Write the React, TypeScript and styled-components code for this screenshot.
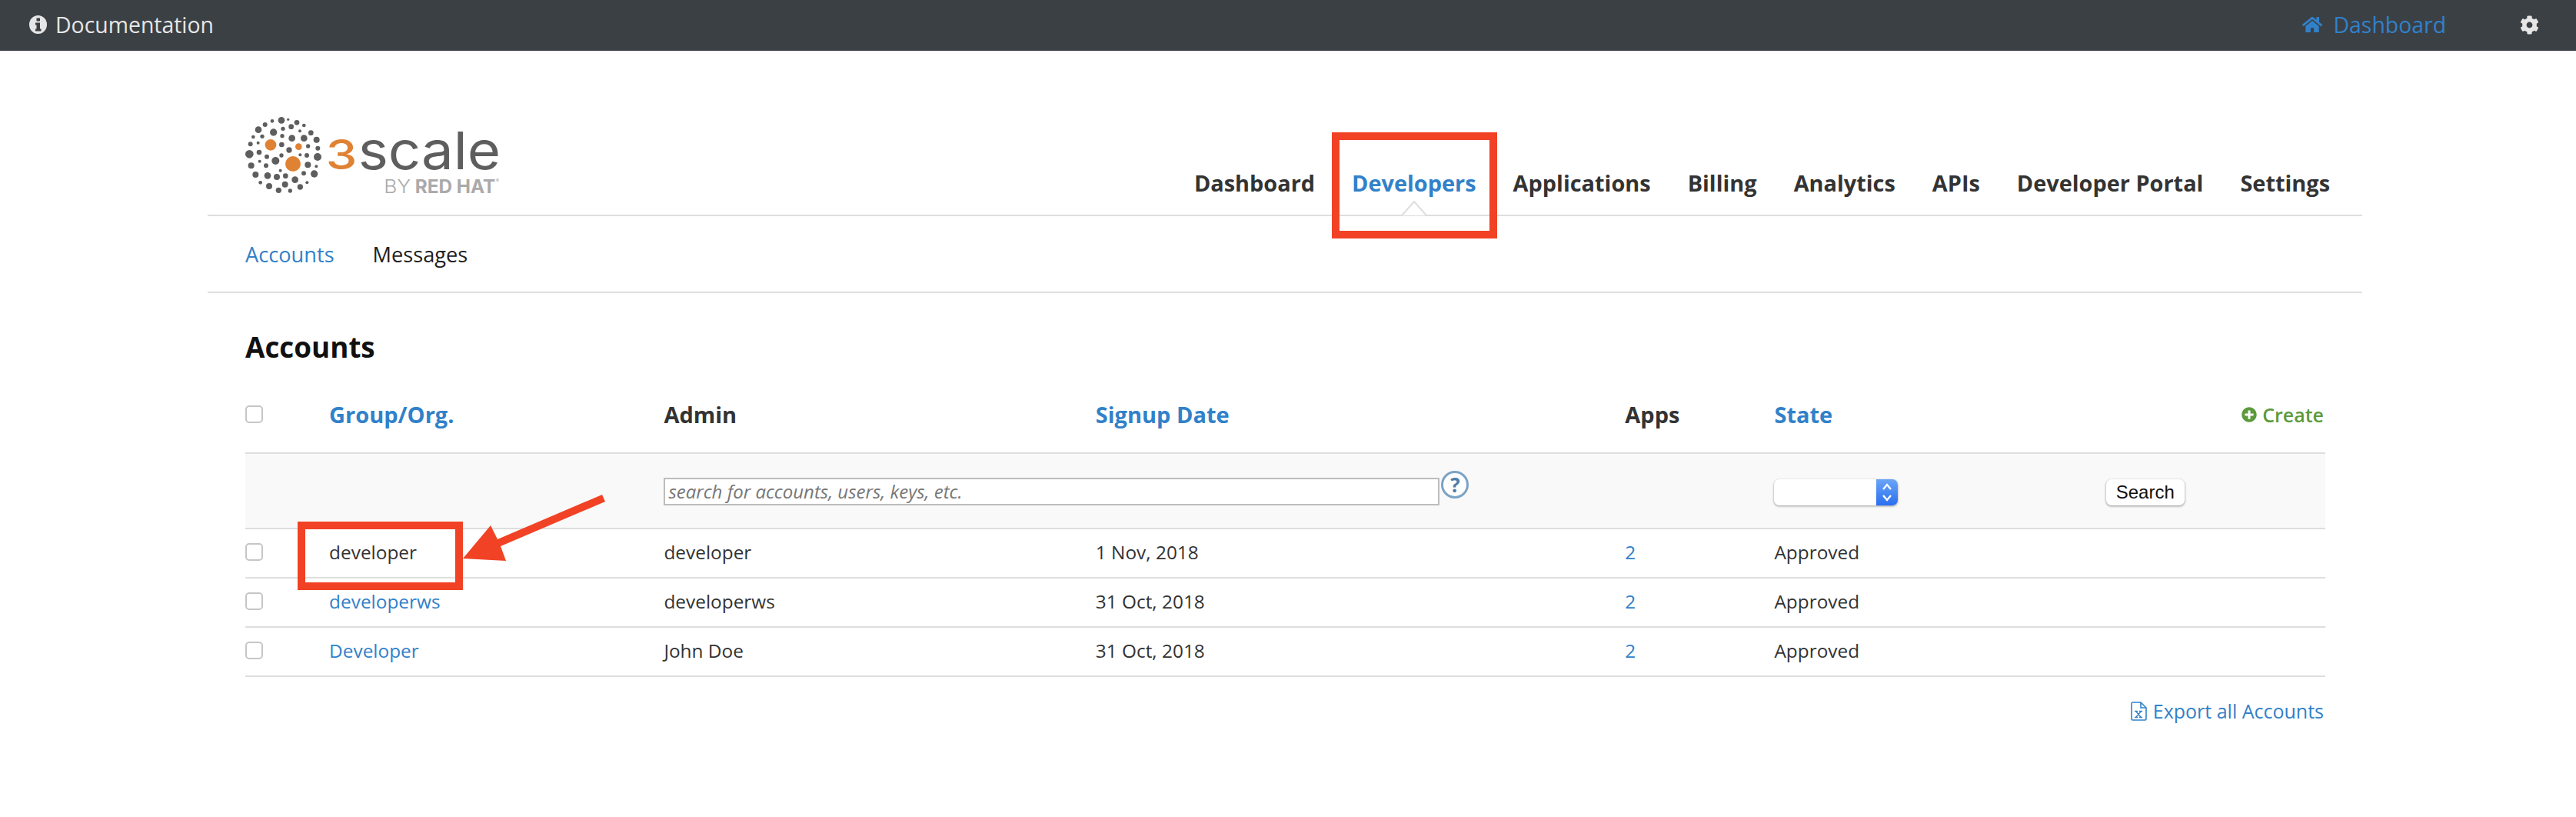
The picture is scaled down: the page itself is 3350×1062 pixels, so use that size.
import styled, { createGlobalStyle } from 'styled-components'
import { FaCog, FaHome, FaPlusCircle } from 'react-icons/fa'

const GlobalStyle = createGlobalStyle`
	html, body {
		margin: 0;
		background: #fff;
		font-family: 'Open Sans', 'Liberation Sans', sans-serif;
		color: #333;
	}
`
const blue = '#3181c9'
const line = '#dedede'

const Page = styled.div`
	position: relative;
	width: 3350px;
	height: 1062px;
	overflow: hidden;
`
const TopBar = styled.div`
	display: flex;
	align-items: center;
	height: 66px;
	padding: 0 48px 2px 38px;
	box-sizing: border-box;
	background: #3b4045;
	font-size: 28.4px;
`
const DocLink = styled.a`
	display: flex;
	align-items: center;
	gap: 11px;
	color: #e6e6e6;
`
const DashLink = styled.a`
	display: flex;
	align-items: center;
	gap: 14px;
	margin-left: auto;
	color: ${blue};
`
const Gear = styled.a`
	display: flex;
	margin-left: 96px;
	color: #e6e6e6;
`
const Wrapper = styled.div`
	margin-left: 270px;
	width: 2802px;
`
const Header = styled.div`
	display: flex;
	justify-content: space-between;
	align-items: flex-end;
	height: 215px;
	padding: 0 42px 0 49px;
	box-sizing: border-box;
	border-bottom: 2px solid ${line};
`
const LogoBox = styled.svg`
	display: block;
	width: 334px;
	height: 130px;
	margin-bottom: 11px;
`
const Nav = styled.nav`
	display: flex;
	gap: 48px;
	padding-bottom: 22px;
`
const NavItem = styled.a<{ $active?: boolean }>`
	position: relative;
	font-size: 28.9px;
	font-weight: 700;
	line-height: 38px;
	color: ${p => (p.$active ? blue : '#333')};
`
const Caret = styled.svg`
	position: absolute;
	left: 50%;
	bottom: -24px;
	width: 38px;
	height: 20px;
	margin-left: -19px;
`
const SubNav = styled.div`
	display: flex;
	gap: 50px;
	align-items: center;
	height: 98px;
	padding: 0 49px;
	border-bottom: 2px solid ${line};
	font-size: 27.2px;
`
const SubItem = styled.a<{ $active?: boolean }>`
	color: ${p => (p.$active ? blue : '#222')};
`
const Main = styled.main`
	padding: 0 48px 0 49px;
`
const Title = styled.h1`
	margin: 0;
	padding-top: 46px;
	font-size: 36.8px;
	font-weight: 700;
	line-height: 48px;
	height: 82px;
	color: #111;
`
const Table = styled.table`
	width: 100%;
	table-layout: fixed;
	border-collapse: collapse;
	font-size: 24.4px;
`
const Th = styled.th<{ $w: number; $link?: boolean }>`
	width: ${p => p.$w}px;
	height: 80px;
	padding: 0 0 20px;
	box-sizing: border-box;
	text-align: left;
	font-size: 29px;
	font-weight: 700;
	color: ${p => (p.$link ? blue : '#333')};
	border-bottom: 2px solid ${line};
`
const FilterRow = styled.tr`
	height: 98px;
	background: #f9f9f9;
	border-bottom: 2px solid ${line};
`
const FilterCell = styled.td`
	padding: 3px 0 0;
`
const Row = styled.tr`
	height: 64px;
	border-bottom: 2px solid ${line};
`
const Td = styled.td`
	padding: 0 0 3px;
`
const BlueText = styled.a`
	color: ${blue};
`
const Check = styled.input.attrs({ type: 'checkbox' })`
	display: block;
	appearance: none;
	width: 23px;
	height: 23px;
	margin: 0;
	background: #fff;
	border: 2px solid #c6c6c6;
	border-radius: 5px;
`
const CreateLink = styled.a`
	display: flex;
	justify-content: flex-end;
	align-items: center;
	gap: 7px;
	margin-right: 2px;
	font-size: 25px;
	font-weight: 600;
	color: #5b9a3c;
`
const SearchBox = styled.div`
	display: flex;
	align-items: flex-start;
	margin-top: -2px;
`
const SearchInput = styled.input`
	width: 1009px;
	height: 36px;
	padding: 0 4px;
	box-sizing: border-box;
	background: #fff;
	border: 2px solid #bdbdbd;
	font-family: inherit;
	font-size: 24px;
	&::placeholder {
		color: #777;
		font-style: italic;
		opacity: 1;
	}
`
const Help = styled.span`
	display: flex;
	align-items: center;
	justify-content: center;
	width: 36px;
	height: 36px;
	margin: -9px 0 0 2px;
	box-sizing: border-box;
	border: 3px solid #7ba3c6;
	border-radius: 50%;
	background: #fff;
	color: #4f7ca8;
	font-size: 26px;
	font-weight: 700;
`
const Select = styled.div`
	display: flex;
	justify-content: flex-end;
	width: 161px;
	height: 34px;
	box-sizing: border-box;
	background: #fff;
	border-radius: 7px;
	box-shadow: 0 1px 3px rgba(0, 0, 0, 0.4);
	overflow: hidden;
`
const SelectArrows = styled.span`
	display: flex;
	align-items: center;
	justify-content: center;
	width: 28px;
	background: linear-gradient(#6aa5f6, #2a6ef0);
`
const SearchButton = styled.button`
	display: block;
	width: 102px;
	height: 34px;
	padding: 0;
	background: #fff;
	border: none;
	border-radius: 7px;
	box-shadow: 0 1px 3px rgba(0, 0, 0, 0.45);
	font-family: 'Liberation Sans', sans-serif;
	font-size: 24px;
	color: #111;
`
const ExportLink = styled.a`
	display: flex;
	justify-content: flex-end;
	align-items: center;
	gap: 8px;
	margin: 27px 2px 0 0;
	font-size: 25px;
	color: ${blue};
`
// red annotations sitting over the page
const Mark = styled.div<{ $x: number; $y: number; $w: number; $h: number }>`
	position: absolute;
	left: ${p => p.$x}px;
	top: ${p => p.$y}px;
	width: ${p => p.$w}px;
	height: ${p => p.$h}px;
	box-sizing: border-box;
	border: 10px solid #f14225;
`
const Arrow = styled.svg`
	position: absolute;
	left: 600px;
	top: 640px;
	width: 190px;
	height: 92px;
`

const dots = [
	[195, 55, 13], [221, 52, 5], [159, 58, 7], [131, 72, 9], [255, 64, 10], [283, 75, 7], [105, 92, 13], [233, 80, 10],
	[201, 88, 8], [267, 97, 6], [164, 102, 14], [310, 104, 10], [85, 120, 7], [120, 118, 8], [198, 116, 8], [236, 125, 13],
	[283, 125, 13], [332, 131, 12], [104, 143, 6], [74, 148, 9], [196, 150, 10], [299, 156, 8], [337, 164, 9], [225, 171, 11],
	[108, 180, 10], [70, 187, 16], [138, 197, 9], [195, 192, 8], [268, 190, 6], [294, 192, 9], [336, 198, 15], [110, 215, 6],
	[172, 213, 15], [135, 232, 9], [298, 229, 12], [331, 235, 6], [77, 232, 12], [191, 251, 6], [94, 267, 12], [141, 271, 13],
	[177, 276, 12], [211, 272, 10], [282, 262, 9], [323, 264, 14], [248, 287, 13], [113, 298, 7], [295, 298, 6], [147, 312, 12],
	[209, 305, 12], [268, 315, 11], [184, 328, 11], [229, 330, 8],
]
const orangeDots = [[153, 151, 22], [262, 158, 13], [240, 225, 30]]

const Logo = () => (
	<LogoBox viewBox='54 0 1002 390'>
		{dots.map(([x, y, r]) => <circle key={`${x}-${y}`} cx={x} cy={y} r={r} fill='#5e5e5e' />)}
		{orangeDots.map(([x, y, r]) => <circle key={`${x}-${y}`} cx={x} cy={y} r={r} fill='#e08233' />)}
		<text x='368' y='245' fontFamily='Inter' fontSize='160' fontWeight='500' fill='#e08233' textLength='122' lengthAdjust='spacingAndGlyphs'>3</text>
		<text x='494' y='245' fontFamily='Inter' fontSize='204' fontWeight='400' fill='#5e5e5e' textLength='556' lengthAdjust='spacingAndGlyphs'>scale</text>
		<text x='595' y='338' fontFamily='Inter' fontSize='72' fontWeight='300' fill='#aaa' textLength='104' lengthAdjust='spacingAndGlyphs'>BY</text>
		<text x='716' y='338' fontFamily='Inter' fontSize='72' fontWeight='700' fill='#aaa' textLength='314' lengthAdjust='spacingAndGlyphs'>RED HAT</text>
		<text x='1032' y='296' fontFamily='Inter' fontSize='18' fill='#aaa'>®</text>
	</LogoBox>
)

const InfoIcon = () => (
	<svg width='23' height='24' viewBox='0 0 23 24'>
		<ellipse cx='11.5' cy='12' rx='11.5' ry='12' fill='#e6e6e6' />
		<path d='M9.5 3.5h4.5v4h-4.5zM8 9.5h6v8h1.5v3h-7.5v-3h1.5v-5h-1.5z' fill='#3b4045' />
	</svg>
)

const ExportIcon = () => (
	<svg width='21' height='25' viewBox='0 0 21 25' fill='none' stroke={blue}>
		<path d='M2.5 1h10.5l7 7v14.5a1.5 1.5 0 0 1-1.500 1.500h-16a1.500 1.500 0 0 1-1.500-1.500v-20a1.500 1.500 0 0 1 1.500-1.500z' strokeWidth='1.600' />
		<path d='M13 1v7h7' strokeWidth='1.600' />
		<path d='M6.500 12.500l7 8M13.500 12.500l-7 8M5 12.500h4M11 12.500h4M5 20.500h4M11 20.500h4' strokeWidth='1.300' />
	</svg>
)

const accounts = [
	{ org: 'developer', admin: 'developer', date: '1 Nov, 2018', current: true },
	{ org: 'developerws', admin: 'developerws', date: '31 Oct, 2018' },
	{ org: 'Developer', admin: 'John Doe', date: '31 Oct, 2018' },
]

export default function App() {
	return (
		<Page>
			<GlobalStyle />
			<TopBar>
				<DocLink><InfoIcon />Documentation</DocLink>
				<DashLink><FaHome size={26} />Dashboard</DashLink>
				<Gear><FaCog size={25} /></Gear>
			</TopBar>
			<Wrapper>
				<Header>
					<Logo />
					<Nav>
						<NavItem>Dashboard</NavItem>
						<NavItem $active>
							Developers
							<Caret viewBox='0 0 38 20'>
								<path d='M2 19 H3 L19 1 L35 19 H36' fill='#fff' stroke={line} strokeWidth='2' />
							</Caret>
						</NavItem>
						<NavItem>Applications</NavItem>
						<NavItem>Billing</NavItem>
						<NavItem>Analytics</NavItem>
						<NavItem>APIs</NavItem>
						<NavItem>Developer Portal</NavItem>
						<NavItem>Settings</NavItem>
					</Nav>
				</Header>
				<SubNav>
					<SubItem $active>Accounts</SubItem>
					<SubItem>Messages</SubItem>
				</SubNav>
				<Main>
					<Title>Accounts</Title>
					<Table>
						<thead>
							<tr>
								<Th $w={109}><Check /></Th>
								<Th $w={435} $link>Group/Org.</Th>
								<Th $w={561}>Admin</Th>
								<Th $w={688} $link>Signup Date</Th>
								<Th $w={194}>Apps</Th>
								<Th $w={431} $link>State</Th>
								<Th $w={285}><CreateLink><FaPlusCircle size={20} />Create</CreateLink></Th>
							</tr>
						</thead>
						<tbody>
							<FilterRow>
								<FilterCell />
								<FilterCell />
								<FilterCell colSpan={3}>
									<SearchBox>
										<SearchInput placeholder='search for accounts, users, keys, etc.' />
										<Help>?</Help>
									</SearchBox>
								</FilterCell>
								<FilterCell>
									<Select>
										<SelectArrows>
											<svg width='16' height='26' viewBox='0 0 16 26' fill='none' stroke='#fff' strokeWidth='2.4'>
												<path d='M3 9l5-6 5 6M3 17l5 6 5-6' />
											</svg>
										</SelectArrows>
									</Select>
								</FilterCell>
								<FilterCell><SearchButton>Search</SearchButton></FilterCell>
							</FilterRow>
							{accounts.map(a => (
								<Row key={a.org}>
									<Td><Check /></Td>
									<Td>{a.current ? a.org : <BlueText>{a.org}</BlueText>}</Td>
									<Td>{a.admin}</Td>
									<Td>{a.date}</Td>
									<Td><BlueText>2</BlueText></Td>
									<Td>Approved</Td>
									<Td />
								</Row>
							))}
						</tbody>
					</Table>
					<ExportLink><ExportIcon />Export all Accounts</ExportLink>
				</Main>
			</Wrapper>
			<Mark $x={1732} $y={172} $w={215} $h={138} />
			<Mark $x={387} $y={678} $w={215} $h={89} />
			<Arrow viewBox='600 640 190 92'>
				<polygon points='602,726 638,683 647,701 783,643 787,652 651,710 658,729' fill='#f14225' />
			</Arrow>
		</Page>
	)
}
